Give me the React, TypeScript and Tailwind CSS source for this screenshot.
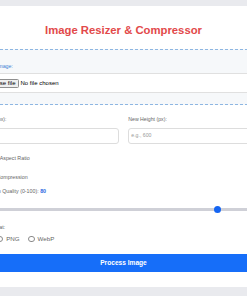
import { useState } from 'react'

const formats = ['JPEG', 'PNG', 'WebP']

function Check({ label }: { label: string }) {
  return (
    <label className="flex h-[8px] items-center gap-[2px] leading-[8px] text-[5.3px] text-[#666]">
      <span className="h-[7px] w-[7px] shrink-0 rounded-[1px] border border-[#888] bg-white" />
      {label}
    </label>
  )
}

export default function App() {
  const [format, setFormat] = useState('JPEG')
  const quality = 80

  return (
    <div className="flex min-h-screen justify-center overflow-hidden bg-[#e9eaee] font-['Liberation_Sans',Arial,sans-serif]">
      <div className="mt-[6px] mb-auto w-[340px] shrink-0 bg-white px-[16px] pt-[17px] pb-[15px]">
        <h1 className="h-[14px] text-center text-[11.3px] font-bold leading-[14px] text-[#e2494a]">
          Image Resizer &amp; Compressor
        </h1>

        <div className="mt-[12px] border border-dashed border-[#8db6e2] bg-[#f6f8fa] px-[8px] pt-[12px] pb-[11px]">
          <div className="h-[8px] text-[5.3px] leading-[8px] text-[#3d7fd5]">Upload Image:</div>
          <div className="mt-[3px] flex h-[20px] items-center rounded-[2px] border border-[#e0e0e0] bg-white px-[3px]">
            <span className="flex h-[9px] items-center rounded-[1.5px] border border-[#8f8f8f] bg-[#efefef] px-[2px] text-[6px] leading-[7px] text-black">
              Choose file
            </span>
            <span className="ml-[2px] text-[6px] leading-[7px] text-black">No file chosen</span>
          </div>
        </div>

        <div className="mt-[11px] grid grid-cols-2 gap-x-[9.5px]">
          <div>
            <div className="h-[7px] text-[5.2px] leading-[7px] text-[#666]">New Width (px):</div>
            <div className="mt-[5px] flex h-[16px] items-center rounded-[3px] border border-[#dddddd] px-[2px] text-[5.2px] text-[#999]">
              e.g., 800
            </div>
          </div>
          <div>
            <div className="h-[7px] text-[5.2px] leading-[7px] text-[#666]">New Height (px):</div>
            <div className="mt-[5px] flex h-[16px] items-center rounded-[3px] border border-[#dddddd] px-[2px] text-[5.2px] text-[#999]">
              e.g., 600
            </div>
          </div>
        </div>

        <div className="mt-[10px]">
          <Check label="Maintain Aspect Ratio" />
        </div>
        <div className="mt-[11px]">
          <Check label="Enable Compression" />
        </div>

        <div className="mt-[6px] h-[8px] text-[5.3px] leading-[8px] text-[#666]">
          Compression Quality (0-100): <span className="font-bold text-[#1f66e0]">{quality}</span>
        </div>

        <div className="relative mt-[11px] flex h-[7px] items-center">
          <div className="h-[2.5px] w-full rounded-full bg-[#cfd0d7]" />
          <span className="absolute left-[calc(80%-2px)] top-0 h-[7px] w-[7px] rounded-full bg-[#1565f2]" />
        </div>

        <div className="mt-[10px] h-[8px] text-[5.3px] leading-[8px] text-[#666]">Output Format:</div>
        <div className="mt-[4px] ml-[-7px] flex h-[8px] items-center gap-[8.5px] text-[6.2px] text-[#666]">
          {formats.map((f) => (
            <label key={f} className="flex items-center gap-[3px]" onClick={() => setFormat(f)}>
              <span
                className={
                  format === f
                    ? 'h-[6.5px] w-[6.5px] rounded-full border-[2px] border-[#1565f2] bg-white'
                    : 'h-[6.5px] w-[6.5px] rounded-full border border-[#8a8a8a] bg-white'
                }
              />
              {f}
            </label>
          ))}
        </div>

        <button className="mt-[11px] flex h-[18px] w-full items-center justify-center rounded-[3px] bg-[#166ef9] text-[6.6px] font-bold text-white">
          Process Image
        </button>
      </div>
    </div>
  )
}
